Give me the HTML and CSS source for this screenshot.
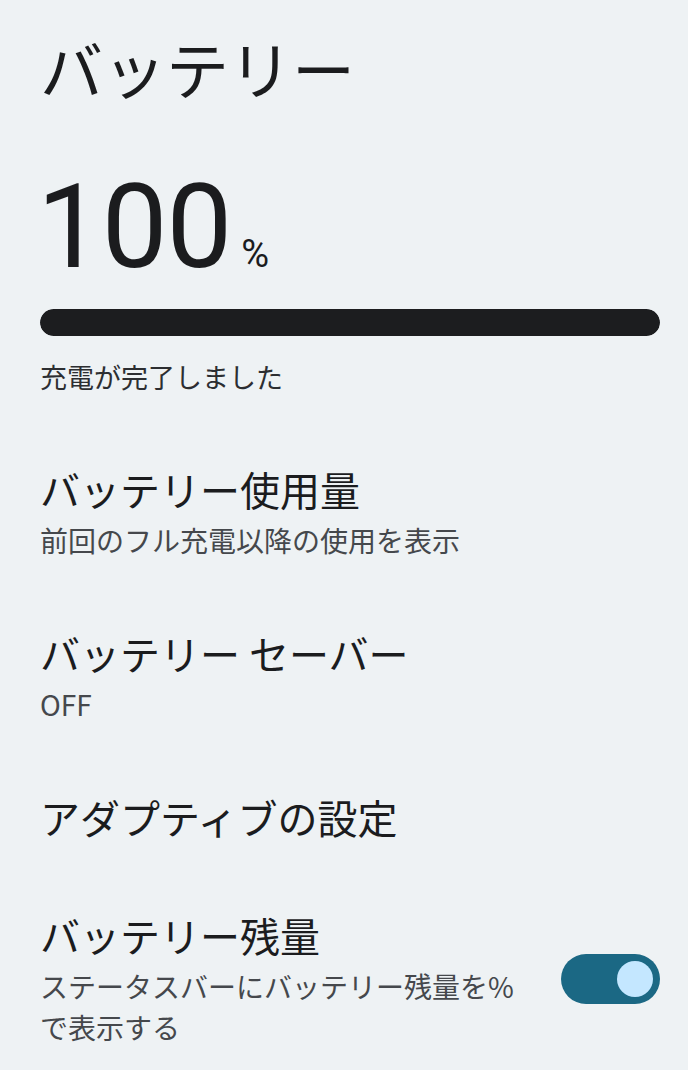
FILE: index.html
```html
<!DOCTYPE html>
<html lang="ja">
<head>
  <meta charset="UTF-8">
  <meta name="viewport" content="width=device-width, initial-scale=1.0">
  <title>バッテリー</title>
  <link rel="stylesheet" href="styles.css">
</head>
<body>
  <h1 class="page-title">バッテリー</h1>

  <div class="level">
    <span class="level-value">100</span>
    <span class="level-unit">%</span>
  </div>
  <div class="meter">
    <div class="meter-fill" style="width: 100%"></div>
  </div>
  <div class="status">充電が完了しました</div>

  <div class="prefs">
    <div class="pref">
      <div class="pref-text">
        <div class="pref-title">バッテリー使用量</div>
        <div class="pref-summary">前回のフル充電以降の使用を表示</div>
      </div>
    </div>
    <div class="pref">
      <div class="pref-text">
        <div class="pref-title">バッテリー セーバー</div>
        <div class="pref-summary">OFF</div>
      </div>
    </div>
    <div class="pref">
      <div class="pref-text">
        <div class="pref-title">アダプティブの設定</div>
      </div>
    </div>
    <div class="pref">
      <div class="pref-text">
        <div class="pref-title">バッテリー残量</div>
        <div class="pref-summary">ステータスバーにバッテリー残量を%で表示する</div>
      </div>
      <div class="switch on">
        <div class="switch-thumb"></div>
      </div>
    </div>
  </div>
</body>
</html>
```

FILE: styles.css
```css
body {
  margin: 0;
  padding: 0 28px 0 40px;
  background-color: #eef2f4;
  color: #1b1c1e;
  font-family: "Noto Sans CJK JP", "Noto Sans", sans-serif;
}
.page-title {
  margin: 27px 0 0;
  font-size: 63px;
  font-weight: 400;
  line-height: 80px;
}
.level {
  display: flex;
  align-items: baseline;
  margin-top: 60px;
}
.level-value {
  margin-left: -3px;
  font-family: Roboto, "Noto Sans", sans-serif;
  font-size: 117px;
  line-height: 120px;
  letter-spacing: -1px;
}
.level-unit {
  font-family: Roboto, "Noto Sans", sans-serif;
  font-size: 38px;
  margin-left: 10px;
}
.meter {
  height: 27px;
  margin-top: 22px;
  border-radius: 14px;
  background-color: #c9cdd0;
  overflow: hidden;
}
.meter-fill {
  height: 100%;
  background-color: #1c1d1f;
  border-radius: 14px;
}
.status {
  margin-top: 21px;
  font-size: 27px;
  line-height: 40px;
  color: #2c2e31;
}
.prefs {
  margin-top: 33px;
}
.pref {
  display: flex;
  align-items: center;
  gap: 40px;
  padding: 33px 0;
}
.pref-text {
  flex: 1;
}
.pref-title {
  font-size: 40px;
  line-height: 52px;
}
.pref-summary {
  margin-top: 5px;
  font-size: 28px;
  line-height: 41px;
  color: #45484c;
}
.switch {
  width: 99px;
  height: 50px;
  box-sizing: border-box;
  padding: 7px;
  border-radius: 25px;
  background-color: #1b6884;
  display: flex;
  justify-content: flex-end;
  align-items: center;
}
.switch-thumb {
  width: 36px;
  height: 36px;
  border-radius: 50%;
  background-color: #c4e7ff;
}
```
